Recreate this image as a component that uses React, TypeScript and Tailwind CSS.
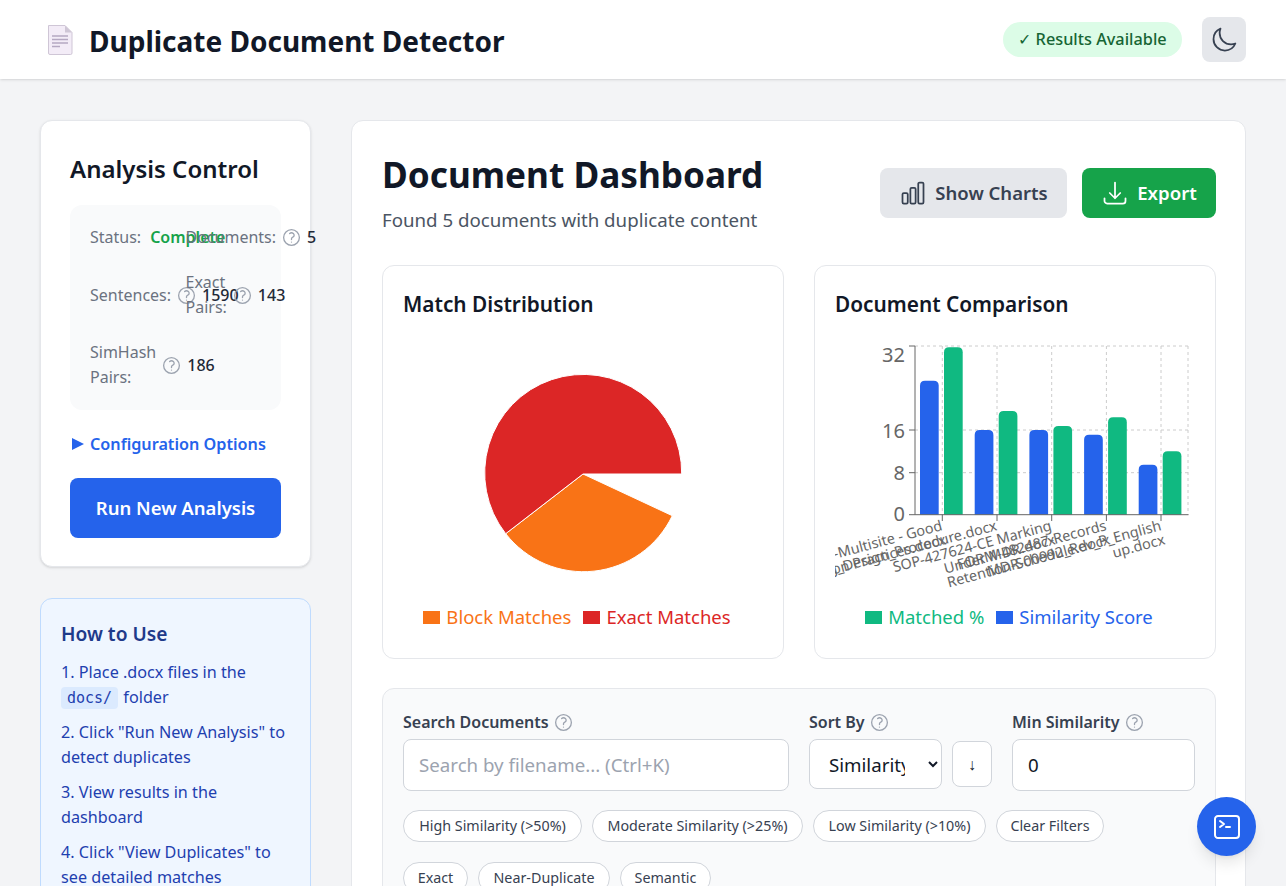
import {
  HiOutlineArrowDownTray,
  HiOutlineChartBar,
  HiOutlineCommandLine,
  HiOutlineMoon,
  HiOutlineQuestionMarkCircle,
} from "react-icons/hi2";

const bars = [
  { x: 942.3, blue: 380.7, green: 347.3 },
  { x: 997, blue: 430, green: 411 },
  { x: 1051.7, blue: 430, green: 426 },
  { x: 1106.4, blue: 434.7, green: 417.3 },
  { x: 1161, blue: 464.7, green: 451.3 },
];

const barLabels = [
  { x: 943, y: 530, lines: ["-Multisite - Good", "on Practices.docx"] },
  { x: 997.7, y: 530, lines: ["g_Design_Procedure.docx"] },
  { x: 1052.4, y: 530, lines: ["SOP-427624-CE Marking", "Under MDR.docx"] },
  { x: 1107.1, y: 530, lines: ["FORM-482487-Records", "Retention-Schedule.docx"] },
  { x: 1162, y: 530, lines: ["MDR-00992_Rev_P_English", "up.docx"] },
];

function Help() {
  return <HiOutlineQuestionMarkCircle className="w-[21px] h-[21px] shrink-0 text-[#9ca3af]" />;
}

function Stat({ label, value, help = true, valueClass = "text-[#1f2937] font-medium" }: { label: string; value: string; help?: boolean; valueClass?: string }) {
  return (
    <div className="flex items-center gap-[5px] min-w-0">
      <span className="text-[#6b7280]">{label}</span>
      {help && <Help />}
      <span className={valueClass}>{value}</span>
    </div>
  );
}

function Chip({ children, width }: { children: string; width: string }) {
  return (
    <button className={`${width} h-8 rounded-full border border-[#d1d5db] bg-white text-[14.3px] text-[#374151] whitespace-nowrap`}>
      {children}
    </button>
  );
}

function PieCard() {
  return (
    <div className="bg-white border border-[#e5e7eb] rounded-xl p-5 h-[394px] flex flex-col">
      <h3 className="text-[20.8px] font-semibold text-[#111827] leading-[36px]">Match Distribution</h3>
      <svg width="360" height="260" viewBox="403 334 360 260" className="mt-[12px]">
        <path d="M583 474 L505.7 533.7 A98.5 98.5 0 0 0 672.3 515.7 Z" fill="#f97316" stroke="#fff" strokeWidth="1" />
        <path d="M583 474 L681.7 474 A98.5 98.5 0 1 0 505.7 533.7 Z" fill="#dc2626" stroke="#fff" strokeWidth="1" />
      </svg>
      <div className="flex justify-center gap-3 mt-[10px] pr-3 leading-[26px] text-[18.5px]">
        <span className="flex items-center gap-[6px] text-[#f97316]"><i className="w-[17px] h-[13px] bg-[#f97316]" />Block Matches</span>
        <span className="flex items-center gap-[6px] text-[#dc2626]"><i className="w-[17px] h-[13px] bg-[#dc2626]" />Exact Matches</span>
      </div>
    </div>
  );
}

function BarCard() {
  return (
    <div className="bg-white border border-[#e5e7eb] rounded-xl p-5 h-[394px] flex flex-col">
      <h3 className="text-[20.8px] font-semibold text-[#111827] leading-[36px]">Document Comparison</h3>
      <svg width="360" height="260" viewBox="835 334 360 260" className="mt-[12px]">
        {[346, 430, 472.7].map((y) => (
          <line key={y} x1="915" x2="1188" y1={y} y2={y} stroke="#ccc" strokeDasharray="3 3" />
        ))}
        {[...bars.map((b) => b.x), 1188].map((x) => (
          <line key={x} x1={x} x2={x} y1="346" y2="514.7" stroke="#ccc" strokeDasharray="3 3" />
        ))}
        {bars.map((b) => (
          <g key={b.x}>
            <path d={`M${b.x - 22.3} 514.7 V${b.blue + 5} q0 -5 5 -5 h8.7 q5 0 5 5 V514.7 Z`} fill="#2563eb" />
            <path d={`M${b.x + 1.7} 514.7 V${b.green + 5} q0 -5 5 -5 h8.7 q5 0 5 5 V514.7 Z`} fill="#10b981" />
          </g>
        ))}
        <line x1="915" x2="1188.5" y1="514.7" y2="514.7" stroke="#666" />
        <line x1="915" x2="915" y1="346" y2="514.7" stroke="#666" />
        {[346, 430, 472.7, 514.7].map((y) => (
          <line key={y} x1="909" x2="915" y1={y} y2={y} stroke="#666" />
        ))}
        {bars.map((b) => (
          <line key={b.x} x1={b.x} x2={b.x} y1="514.7" y2="521" stroke="#666" />
        ))}
        {[["32", 362], ["16", 438], ["8", 480], ["0", 521]].map(([t, y]) => (
          <text key={t} x="905" y={y} textAnchor="end" fill="#666" fontSize="20">{t}</text>
        ))}
        {barLabels.map((l) => (
          <text key={l.x} transform={`rotate(-15 ${l.x} ${l.y})`} x={l.x} y={l.y} textAnchor="end" fill="#666" fontSize="14.4">
            {l.lines.map((line, i) => (
              <tspan key={line} x={l.x} dy={i === 0 ? 0 : 14.5}>{line}</tspan>
            ))}
          </text>
        ))}
      </svg>
      <div className="flex justify-center gap-3 mt-[10px] pr-3 leading-[26px] text-[18.5px]">
        <span className="flex items-center gap-[6px] text-[#10b981]"><i className="w-[17px] h-[13px] bg-[#10b981]" />Matched %</span>
        <span className="flex items-center gap-[6px] text-[#2563eb]"><i className="w-[17px] h-[13px] bg-[#2563eb]" />Similarity Score</span>
      </div>
    </div>
  );
}

export default function App() {
  return (
    <div className="h-[886px] overflow-hidden bg-[#f3f4f6] font-['Noto_Sans',sans-serif] text-[#111827]">
      {/* Header */}
      <header className="h-[79px] bg-white shadow-sm flex items-center justify-between pl-[46px] pr-10">
        <div className="flex items-center gap-[15px]">
          <svg width="28" height="32" viewBox="0 0 28 32">
            <path d="M2.5 1.5 H19 L26 8.5 V29 a1.5 1.5 0 0 1 -1.5 1.5 H4 a1.5 1.5 0 0 1 -1.5 -1.5 Z" fill="#f3ecf7" stroke="#cfc6d6" />
            <path d="M19 1.5 L26 8.5 H19 Z" fill="#cfc6d6" />
            <path d="M6 12h16M6 15.5h16M6 19h16M6 22.5h8" stroke="#b5a8c2" strokeWidth="1.3" />
          </svg>
          <h1 className="text-[28px] font-bold leading-none pt-[3px]">Duplicate Document Detector</h1>
        </div>
        <div className="flex items-center gap-5">
          <span className="w-[179px] h-[35px] rounded-full bg-[#dcfce7] text-[#166534] text-[16.3px] font-medium flex items-center justify-center">✓ Results Available</span>
          <button className="w-11 h-[45px] rounded-lg bg-[#e5e7eb] flex items-center justify-center text-[#374151]">
            <HiOutlineMoon className="w-7 h-7" />
          </button>
        </div>
      </header>

      <div className="flex gap-10 px-10 pt-[41px]">
        {/* Sidebar */}
        <aside className="w-[271px] shrink-0 flex flex-col gap-[31px]">
          <section className="bg-white border border-[#e5e7eb] rounded-xl shadow-sm p-[29px] h-[447px]">
            <h2 className="text-2xl font-semibold leading-9 mt-[1px]">Analysis Control</h2>
            <div className="mt-[18px] bg-[#f9fafb] rounded-xl p-5 grid grid-cols-2 gap-5 text-base leading-[25px]">
              <Stat label="Status:" value="Complete" help={false} valueClass="text-[#16a34a] font-semibold ml-[4px]" />
              <Stat label="Documents:" value="5" />
              <Stat label="Sentences:" value="1590" />
              <Stat label="Exact Pairs:" value="143" />
              <Stat label="SimHash Pairs:" value="186" />
            </div>
            <div className="mt-[22px] flex items-center gap-[6px] pl-[2px] text-[#2563eb] font-semibold leading-6 text-[16.2px]">
              <span className="w-0 h-0 border-y-[6.5px] border-y-transparent border-l-[12px] border-l-[#2563eb]" />
              Configuration Options
            </div>
            <button className="mt-[22px] w-full h-[60px] rounded-lg bg-[#2563eb] text-white text-[18.5px] font-semibold">Run New Analysis</button>
          </section>
          <section className="bg-[#eff6ff] border border-[#bfdbfe] rounded-xl p-5 text-[16.2px] text-[#1e40af] leading-[25px]">
            <h3 className="text-[19.2px] font-semibold text-[#1e3a8a] leading-7 mb-[12px] mt-[1px]">How to Use</h3>
            <ol className="flex flex-col gap-[10px]">
              <li>1. Place .docx files in the <code className="font-['DejaVu_Sans_Mono',monospace] text-[15px] leading-none bg-[#dbeafe] rounded px-[6px] py-[2px] mr-[1px]">docs/</code> folder</li>
              <li>2. Click "Run New Analysis" to detect duplicates</li>
              <li>3. View results in the dashboard</li>
              <li>4. Click "View Duplicates" to see detailed matches</li>
            </ol>
          </section>
        </aside>

        {/* Main */}
        <main className="flex-1 bg-white border border-[#e5e7eb] rounded-xl pl-[30px] pr-[29px] py-[30px]">
          <div className="flex items-start justify-between">
            <div>
              <h2 className="text-[35.2px] font-bold leading-[46px]">Document Dashboard</h2>
              <p className="text-[#4b5563] text-[18.7px] leading-7 mt-[9px]">Found 5 documents with duplicate content</p>
            </div>
            <div className="flex gap-[15px] mt-[17px]">
              <button className="w-[187px] h-[50px] rounded-lg bg-[#e5e7eb] text-[#374151] text-[18.5px] font-semibold flex items-center justify-center gap-2">
                <HiOutlineChartBar className="w-7 h-7" />Show Charts
              </button>
              <button className="w-[134px] h-[50px] rounded-lg bg-[#16a34a] text-white text-[18.6px] font-semibold flex items-center justify-center gap-2">
                <HiOutlineArrowDownTray className="w-7 h-7" />Export
              </button>
            </div>
          </div>

          <div className="grid grid-cols-2 gap-[30px] mt-[31px]">
            <PieCard />
            <BarCard />
          </div>

          <div className="mt-[29px] bg-[#f9fafb] border border-[#e5e7eb] rounded-xl p-5">
            <div className="flex gap-5 items-start">
              <div className="w-[386px]">
                <label className="flex items-center gap-1 font-semibold text-[#374151] leading-[26px] mb-[4px]">Search Documents <Help /></label>
                <input readOnly placeholder="Search by filename... (Ctrl+K)" className="w-full h-[52px] px-[15px] pb-[2px] bg-white border border-[#d1d5db] rounded-lg text-[18.7px] placeholder:text-[#9ca3af]" />
              </div>
              <div>
                <label className="flex items-center gap-1 font-semibold text-[#374151] leading-[26px] mb-[4px]">Sort By <Help /></label>
                <div className="flex items-center gap-[10px]">
                  <select className="w-[133px] h-[50px] pl-[15px] pr-5 bg-white border border-[#d1d5db] rounded-lg text-[18.7px]">
                    <option>Similarity</option>
                  </select>
                  <button className="w-10 h-[46px] bg-white border border-[#d1d5db] rounded-lg text-base">↓</button>
                </div>
              </div>
              <div className="w-[183px]">
                <label className="flex items-center gap-1 font-semibold text-[#374151] leading-[26px] mb-[4px]">Min Similarity <Help /></label>
                <input readOnly value="0" className="w-full h-[52px] px-[15px] pb-[2px] bg-white border border-[#d1d5db] rounded-lg text-[18.7px]" />
              </div>
            </div>
            <div className="flex gap-[10px] mt-[19px]">
              <Chip width="w-[179px]">High Similarity (&gt;50%)</Chip>
              <Chip width="w-[211px]">Moderate Similarity (&gt;25%)</Chip>
              <Chip width="w-[173px]">Low Similarity (&gt;10%)</Chip>
              <Chip width="w-[108px]">Clear Filters</Chip>
            </div>
            <div className="flex gap-[10px] mt-5">
              <Chip width="w-[65px]">Exact</Chip>
              <Chip width="w-[132px]">Near-Duplicate</Chip>
              <Chip width="w-[91px]">Semantic</Chip>
            </div>
          </div>
        </main>
      </div>

      <button className="fixed right-[30px] bottom-[30px] w-[59px] h-[59px] rounded-full bg-[#2563eb] text-white shadow-lg flex items-center justify-center">
        <HiOutlineCommandLine className="w-8 h-8" />
      </button>
    </div>
  );
}
